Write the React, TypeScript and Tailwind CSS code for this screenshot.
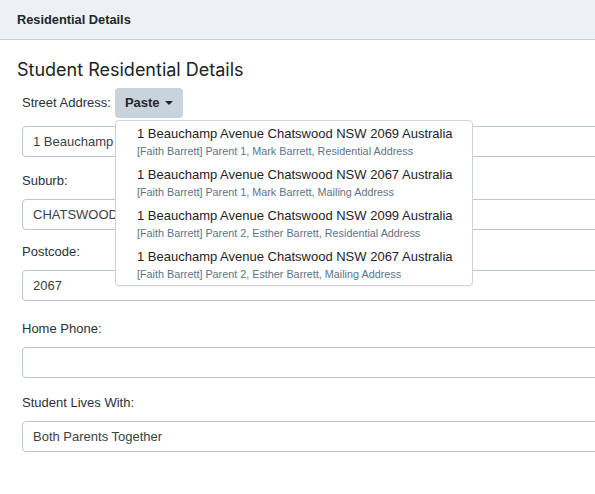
import { useState } from 'react';

const OPTIONS = [
  { addr: '1 Beauchamp Avenue Chatswood NSW 2069 Australia', src: '[Faith Barrett] Parent 1, Mark Barrett, Residential Address' },
  { addr: '1 Beauchamp Avenue Chatswood NSW 2067 Australia', src: '[Faith Barrett] Parent 1, Mark Barrett, Mailing Address' },
  { addr: '1 Beauchamp Avenue Chatswood NSW 2099 Australia', src: '[Faith Barrett] Parent 2, Esther Barrett, Residential Address' },
  { addr: '1 Beauchamp Avenue Chatswood NSW 2067 Australia', src: '[Faith Barrett] Parent 2, Esther Barrett, Mailing Address' },
];

function Box({ value }: { value: string }) {
  return (
    <div className="w-[620px] h-[31px] rounded-[4px] border border-[#bcc7cf] bg-white px-[10px] flex items-center text-[13px] text-[#3a4248] whitespace-nowrap">
      {value}
    </div>
  );
}

function Field({ label, value, className }: { label: string; value: string; className: string }) {
  return (
    <div className={className}>
      <label className="block text-[13px] text-[#2b3136] leading-[16px] mb-[10px]">{label}</label>
      <Box value={value} />
    </div>
  );
}

export default function App() {
  const [open] = useState(true);

  return (
    <div className="w-[595px] h-[494px] overflow-hidden bg-white text-[#222]" style={{ fontFamily: '"Liberation Sans", Arial, sans-serif' }}>
      <div className="h-[40px] bg-[#eef1f4] border-b border-[#c5ced5] flex items-center px-[17px]">
        <span className="text-[12.8px] font-bold text-[#1f272d]">Residential Details</span>
      </div>

      <div className="px-[17px] pt-[19px]">
        <h1 className="text-[18px] leading-[22px] text-[#1c2226] mb-[7px]" style={{ fontFamily: 'Inter, sans-serif' }}>
          Student Residential Details
        </h1>

        <div className="pl-[5px]">
          <div className="relative flex items-center gap-[4px] mb-[8px]">
            <span className="text-[13px] text-[#2b3136] whitespace-nowrap">Street Address:</span>
            <button className="h-[30px] px-[10px] rounded-[4px] bg-[#c9d3db] text-[13px] font-bold text-[#1e272e] flex items-center gap-[5px]">
              Paste
              <span className="w-0 h-0 border-l-[4px] border-r-[4px] border-t-[4px] border-l-transparent border-r-transparent border-t-[#1e272e]" />
            </button>

            {open && (
              <div className="absolute left-[93px] top-[32px] z-10 w-[358px] rounded-[4px] border border-[#cdd5db] bg-white shadow-[0_1px_2px_rgba(0,0,0,0.06)]">
                {OPTIONS.map((o, i) => (
                  <div key={i} className="px-[21px] h-[41px] flex flex-col justify-center whitespace-nowrap">
                    <div className="text-[13px] leading-[17px] text-[#1e2326]">{o.addr}</div>
                    <div className="mt-[2px] text-[10.8px] leading-[15px] text-[#5d7484]">{o.src}</div>
                  </div>
                ))}
              </div>
            )}
          </div>

          <Box value="1 Beauchamp" />
          <Field className="mt-[16px]" label="Suburb:" value="CHATSWOOD" />
          <Field className="mt-[14px]" label="Postcode:" value="2067" />
          <Field className="mt-[20px]" label="Home Phone:" value="" />
          <Field className="mt-[17px]" label="Student Lives With:" value="Both Parents Together" />
        </div>
      </div>
    </div>
  );
}
